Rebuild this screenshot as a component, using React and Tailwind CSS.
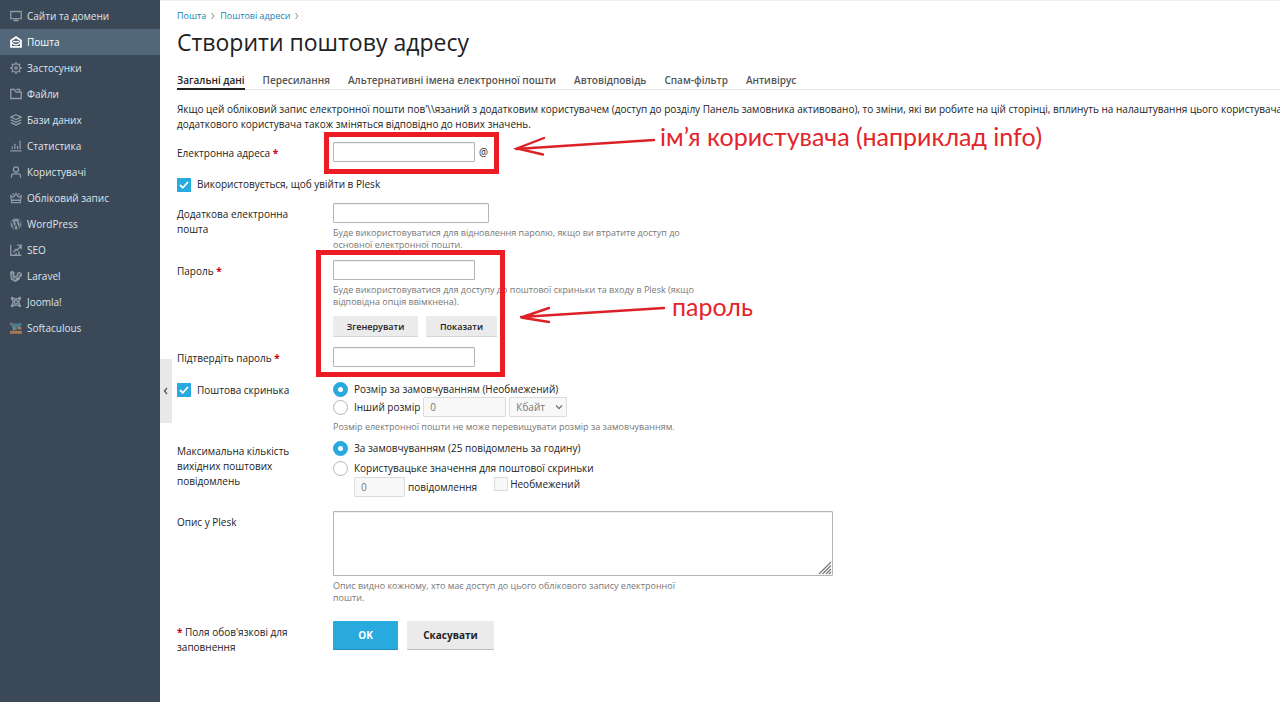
import { FaJoomla, FaWordpress } from 'react-icons/fa';

function Icon({ children }) {
  return (
    <svg viewBox="0 0 16 16" className="h-3 w-3" fill="none" stroke="currentColor" strokeWidth="1.7" aria-hidden="true">
      {children}
    </svg>
  );
}

const menu = [
  { label: 'Сайти та домени', icon: <Icon><path d="M1 2h14v9.5H1zM8 11.5V14M4.5 14.3h7" /></Icon> },
  {
    label: 'Пошта',
    active: true,
    icon: <Icon><path strokeWidth="2.4" d="M1.4 6 8 1.6 14.6 6v8.6H1.4z" /><path d="M4 7.5h8M1.4 8.5 6 11.6h4l4.600-3.100" /></Icon>,
  },
  {
    label: 'Застосунки',
    icon: <Icon><circle cx="8" cy="8" r="5.4" /><circle cx="8" cy="8" r="1.6" /><path strokeWidth="2.4" d="M8 .4v2M8 13.6v2M.4 8h2M13.6 8h2M2.6 2.6 4 4M12 12l1.4 1.4M2.6 13.4 4 12M12 4l1.4-1.4" /></Icon>,
  },
  { label: 'Файли', icon: <Icon><path d="M1 14V2h5l2 3.4h7V14zM8.5 2H13v3" /></Icon> },
  { label: 'Бази даних', icon: <Icon><path d="m8 1 7 3.2-7 3.2-7-3.2zM1 7.8 8 11l7-3.2M1 11.4l7 3.2 7-3.2" /></Icon> },
  { label: 'Статистика', icon: <Icon><path d="M.5 14.5h15M3 12V8.5M6.5 12V5M10 12V7.5M13.5 12V1" /></Icon> },
  { label: 'Користувачі', icon: <Icon><circle cx="8" cy="4.6" r="3.4" /><path d="M2 15.5v-2.3c0-1.8 1.4-2.7 3-2.7h6c1.6 0 3 .9 3 2.7v2.3" /></Icon> },
  { label: 'Обліковий запис', icon: <Icon><path d="M2.3 14.3h11.4L15 5l-3.8 2L8 2 4.8 7 1 5zM2 11h12M3 3h2M11 3h2" /></Icon> },
  { label: 'WordPress', icon: <FaWordpress className="h-3 w-3" /> },
  { label: 'SEO', icon: <Icon><path d="M1 1v14h14M4.5 11 8 7l1.5 1.5L14 3M9.5 1.5H15V7M8 15v-3.5M12 15V9.5" /></Icon> },
  {
    label: 'Laravel',
    icon: (
      <svg viewBox="0 0 16 16" className="h-3 w-3" fill="currentColor" aria-hidden="true">
        <path d="m0 2.500 3-1.500 3 1.500v6l3-1.500V4l3-1.500L16 4v4l-3 2v2.500L7 16l-6-3.500z" />
        <path d="M3 4.500v6l4 2.500M9 4.500l3 1.500 3-1.500M12 6v3M7 13v-2.500l5-2.500" fill="none" stroke="#3a4858" />
      </svg>
    ),
  },
  { label: 'Joomla!', icon: <FaJoomla className="h-3 w-3" /> },
  {
    label: 'Softaculous',
    icon: (
      <svg viewBox="0 0 16 16" className="h-3 w-3" aria-hidden="true">
        <path fill="#4a7d92" d="M1 2h10l4-1v4l-4 2H6L1 5z" />
        <path fill="#5d8b8d" d="M2 6h5l3 4H5z" />
        <path fill="#a97850" d="M0 12h16v3.5H0zM9 7l6-1v4h-4zM0 1h3v2H0z" />
        <path fill="#8f9a9a" d="m4 9 5 2H3z" />
      </svg>
    ),
  },
];

const tabs = ['Загальні дані', 'Пересилання', 'Альтернативні імена електронної пошти', 'Автовідповідь', 'Спам-фільтр', 'Антивірус'];

const inputClass = 'block h-5 rounded-[1px] border border-[#b5b5b5] bg-white px-1.5 shadow-[inset_0_1px_1px_#eeeeee] outline-none';
const disabledClass = 'h-5 rounded-[1px] border border-[#dcdcdc] bg-[#f8f8f8] px-1.5 text-[#777777]';

function Sidebar() {
  return (
    <nav className="w-40 shrink-0 bg-[#3a4858] pt-[3px]">
      <ul>
        {menu.map((item) => (
          <li key={item.label}>
            <a
              href="#"
              className={`flex h-[26px] items-center gap-[5px] pl-[10px] ${
                item.active ? 'bg-[#52677a] text-white' : 'text-[#dfe5ea]'
              }`}
            >
              <span className={item.active ? 'text-white' : 'text-[#8f9ba7]'}>{item.icon}</span>
              {item.label}
            </a>
          </li>
        ))}
      </ul>
    </nav>
  );
}

function Chevron({ className, d }) {
  return (
    <svg viewBox="0 0 8 8" className={className} fill="none" stroke="currentColor" strokeWidth="1.3" aria-hidden="true">
      <path d={d} />
    </svg>
  );
}

function Row({ label, htmlFor, required, className = '', children }) {
  return (
    <div className={`grid grid-cols-[156px_1fr] ${className}`}>
      <label htmlFor={htmlFor} className="pr-4 pt-1">
        {label}
        {required && <span className="font-bold text-[#d0021b]"> *</span>}
      </label>
      <div>{children}</div>
    </div>
  );
}

function Hint({ children }) {
  return <p className="mt-1 max-w-[365px] text-[9px] leading-3 text-[#777777]">{children}</p>;
}

function Checkbox({ id }) {
  return (
    <span className="grid h-[14px] w-[14px] shrink-0">
      <input id={id} type="checkbox" defaultChecked className="peer col-start-1 row-start-1 h-[14px] w-[14px] appearance-none border border-[#b5b5b5] checked:border-[#28aade] checked:bg-[#28aade]" />
      <svg viewBox="0 0 14 14" className="pointer-events-none invisible col-start-1 row-start-1 peer-checked:visible" fill="none" stroke="white" strokeWidth="1.8" aria-hidden="true">
        <path d="m3 7 2.8 2.8L11 4" />
      </svg>
    </span>
  );
}

function Radio({ id, name, defaultChecked }) {
  return (
    <input
      id={id}
      name={name}
      type="radio"
      defaultChecked={defaultChecked}
      className="h-[15px] w-[15px] shrink-0 appearance-none rounded-full border border-[#b5b5b5] bg-white checked:border-5 checked:border-[#28aade]"
    />
  );
}

// Red marks drawn over the form
function Annotations() {
  return (
    <div className="pointer-events-none absolute inset-0 overflow-hidden font-['Lato','Open_Sans',sans-serif] text-[25px] leading-8 text-[#e3242b]">
      <div className="absolute left-[164px] top-[131px] h-[42px] w-[175px] border-5 border-[#ed1c24]" />
      <div className="absolute left-[156px] top-[249px] h-[127px] w-[189px] border-5 border-[#ed1c24]" />
      <svg className="absolute left-[350px] top-[129px] h-[200px] w-[160px]" viewBox="510 130 160 200" fill="none" stroke="#dc2229" strokeWidth="2.4" strokeLinecap="round" aria-hidden="true">
        <path d="M654 140 516 149M544 138l-27 10.5 26 6" />
        <path d="M664 308 521 317M549 308l-28 9.5 28 4.500" />
      </svg>
      <span className="absolute left-[500px] top-[119px] whitespace-nowrap">ім’я користувача (наприклад info)</span>
      <span className="absolute left-[512px] top-[289px]">пароль</span>
    </div>
  );
}

export default function App() {
  return (
    <div className="flex min-h-screen bg-white font-['Open_Sans',sans-serif] text-[10px] leading-[15px] text-[#222222]">
      <Sidebar />
      <main className="relative min-w-0 flex-1 overflow-hidden border-t border-[#eeeeee] pl-[17px]">
        <button type="button" aria-label="Згорнути меню" className="absolute left-0 top-[358px] flex h-16 w-3 items-center justify-center bg-[#e8e8e8] text-[#555555]">
          <Chevron className="h-2 w-2" d="M5 1 2.5 4 5 7" />
        </button>

        <div className="flex items-center gap-1 pt-[7px] text-[9px] leading-4 text-[#1585b5]">
          <a href="#">Пошта</a>
          <Chevron className="h-1.5 w-1.5 text-[#888888]" d="m2 0 3 4-3 4" />
          <a href="#">Поштові адреси</a>
          <Chevron className="h-1.5 w-1.5 text-[#888888]" d="m2 0 3 4-3 4" />
        </div>
        <h1 className="mt-1 text-[23px] leading-7">Створити поштову адресу</h1>

        <div role="tablist" className="mt-4 flex gap-[18px] border-b border-[#e6e6e6] font-semibold text-[#555555]">
          {tabs.map((tab, i) => (
            <button
              key={tab}
              type="button"
              role="tab"
              aria-selected={i === 0}
              className={`-mb-px h-[18px] whitespace-nowrap border-b-2 ${i === 0 ? 'border-[#222222] text-[#222222]' : 'border-transparent'}`}
            >
              {tab}
            </button>
          ))}
        </div>

        <p className="mt-3 whitespace-nowrap">
          Якщо цей обліковий запис електронної пошти пов'\\язаний з додатковим користувачем (доступ до розділу Панель замовника активовано), то зміни, які ви робите на цій сторінці, вплинуть на налаштування цього користувача.
          <br />
          додаткового користувача також зміняться відповідно до нових значень.
        </p>

        <form>
          <Row label="Електронна адреса" htmlFor="email" required className="mt-[10px]">
            <div className="flex items-center gap-1">
              <input id="email" type="text" className={`${inputClass} w-[142px]`} />@
            </div>
          </Row>

          <div className="mt-[15px] flex items-center gap-1.5">
            <Checkbox id="login" />
            <label htmlFor="login">Використовується, щоб увійти в Plesk</label>
          </div>

          <Row label="Додаткова електронна пошта" htmlFor="extra" className="mt-[11px]">
            <input id="extra" type="text" className={`${inputClass} w-[156px]`} />
            <Hint>Буде використовуватися для відновлення паролю, якщо ви втратите доступ до основної електронної пошти.</Hint>
          </Row>

          <Row label="Пароль" htmlFor="password" required className="mt-[9px]">
            <input id="password" type="password" className={`${inputClass} w-[142px]`} />
            <Hint>Буде використовуватися для доступу до поштової скриньки та входу в Plesk (якщо відповідна опція ввімкнена).</Hint>
            <div className="mt-2 flex gap-2 text-[9px] font-semibold">
              <button type="button" className="h-[21px] w-[85px] rounded-[1px] border-b border-[#d5d5d5] bg-[#ebebeb]">Згенерувати</button>
              <button type="button" className="h-[21px] w-[71px] rounded-[1px] border-b border-[#d5d5d5] bg-[#ebebeb]">Показати</button>
            </div>
          </Row>

          <Row label="Підтвердіть пароль" htmlFor="confirm" required className="mt-[10px]">
            <input id="confirm" type="password" className={`${inputClass} w-[142px]`} />
          </Row>

          <div className="mt-[15px] grid grid-cols-[156px_1fr]">
            <div className="flex items-start gap-1.5 pt-px">
              <Checkbox id="mailbox" />
              <label htmlFor="mailbox">Поштова скринька</label>
            </div>
            <div>
              <div className="flex items-center gap-1.5">
                <Radio id="size-default" name="size" defaultChecked />
                <label htmlFor="size-default">Розмір за замовчуванням (Необмежений)</label>
              </div>
              <div className="flex items-center">
                <Radio id="size-other" name="size" />
                <label htmlFor="size-other" className="ml-1.5">Інший розмір</label>
                <input type="text" disabled defaultValue="0" aria-label="Інший розмір" className={`${disabledClass} ml-[3px] w-[83px]`} />
                <span className="relative ml-[3px] text-[#777777]">
                  <select disabled aria-label="Одиниця" className={`${disabledClass} block w-[58px] appearance-none`}>
                    <option>Кбайт</option>
                  </select>
                  <Chevron className="absolute right-1 top-1.5 h-2 w-2" d="m1 2.5 3 3 3-3" />
                </span>
              </div>
              <Hint>Розмір електронної пошти не може перевищувати розмір за замовчуванням.</Hint>
            </div>
          </div>

          <div className="mt-2 grid grid-cols-[156px_1fr]">
            <div className="pr-4 pt-[3px]">Максимальна кількість вихідних поштових повідомлень</div>
            <div>
              <div className="flex items-center gap-1.5">
                <Radio id="limit-default" name="limit" defaultChecked />
                <label htmlFor="limit-default">За замовчуванням (25 повідомлень за годину)</label>
              </div>
              <div className="mt-[5px] flex items-center gap-1.5">
                <Radio id="limit-custom" name="limit" />
                <label htmlFor="limit-custom">Користувацьке значення для поштової скриньки</label>
              </div>
              <div className="mt-px flex items-start pl-[21px]">
                <input id="messages" type="text" disabled defaultValue="0" className={`${disabledClass} w-[51px]`} />
                <label htmlFor="messages" className="ml-[3px] pt-[3px]">повідомлення</label>
                <input id="unlimited" type="checkbox" disabled className="ml-[17px] h-[14px] w-[14px] appearance-none border border-[#dcdcdc] bg-[#f8f8f8]" />
                <label htmlFor="unlimited" className="ml-[2px]">Необмежений</label>
              </div>
            </div>
          </div>

          <Row label="Опис у Plesk" htmlFor="description" className="mt-[14px]">
            <div className="relative w-[500px]">
              <textarea id="description" className="block h-[65px] w-full resize-none rounded-[1px] border border-[#b5b5b5] p-1.5 shadow-[inset_0_1px_1px_#eeeeee] outline-none" />
              <svg viewBox="0 0 14 14" className="pointer-events-none absolute bottom-px right-px h-[14px] w-[14px]" stroke="#777777" strokeWidth="1.2" aria-hidden="true">
                <path d="M1 13 13 1M4.5 13 13 4.5M8 13l5-5M11 13l2-2" />
              </svg>
            </div>
            <Hint>Опис видно кожному, хто має доступ до цього облікового запису електронної пошти.</Hint>
          </Row>

          <div className="mt-[17px] grid grid-cols-[156px_1fr]">
            <p className="pr-8 pt-1">
              <span className="font-bold text-[#d0021b]">* </span>Поля обов'язкові для заповнення
            </p>
            <div className="flex gap-[9px] font-bold">
              <button type="submit" className="h-[29px] w-[65px] rounded-[1px] border-b border-[#1c8fbf] bg-[#28aade] text-white">OK</button>
              <button type="button" className="h-[29px] w-[87px] rounded-[1px] border-b border-[#bdbdbd] bg-[#ebebeb]">Скасувати</button>
            </div>
          </div>
        </form>

        <Annotations />
      </main>
    </div>
  );
}
